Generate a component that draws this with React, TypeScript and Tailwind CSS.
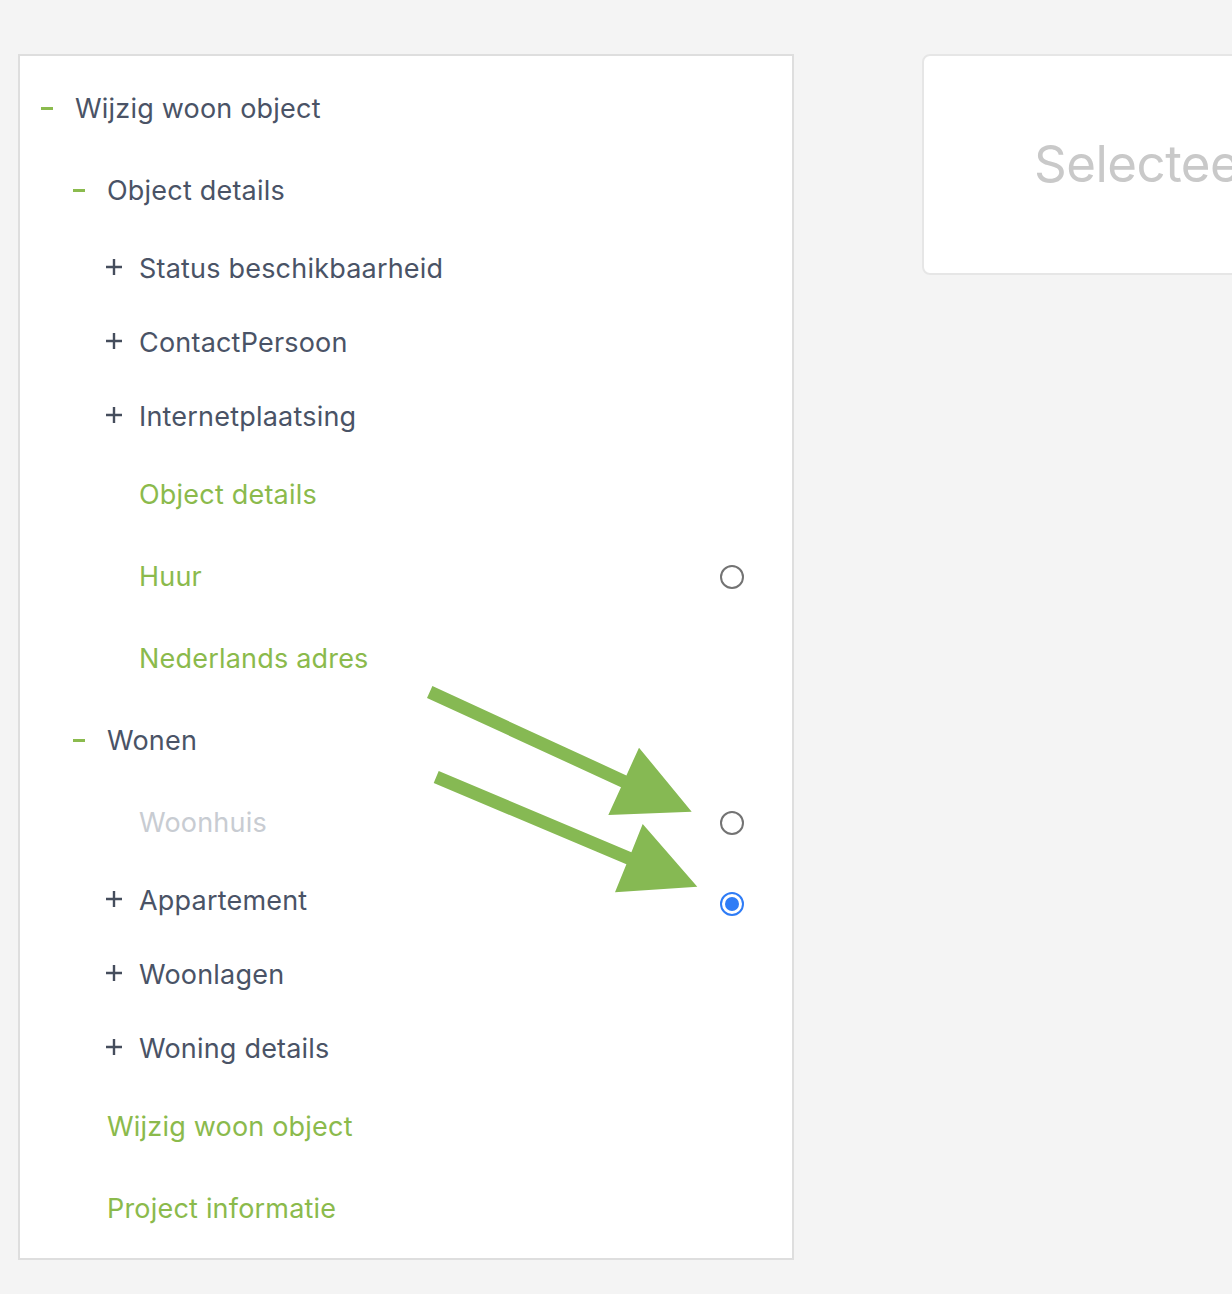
import React from "react";

type Row = {
    label: string;
    level: number;
    kind: "open" | "closed" | "link" | "disabled";
    radio?: "off" | "on";
};

const rows: Row[] = [
    { label: "Wijzig woon object", level: 0, kind: "open" },
    { label: "Object details", level: 1, kind: "open" },
    { label: "Status beschikbaarheid", level: 2, kind: "closed" },
    { label: "ContactPersoon", level: 2, kind: "closed" },
    { label: "Internetplaatsing", level: 2, kind: "closed" },
    { label: "Object details", level: 2, kind: "link" },
    { label: "Huur", level: 2, kind: "link", radio: "off" },
    { label: "Nederlands adres", level: 2, kind: "link" },
    { label: "Wonen", level: 1, kind: "open" },
    { label: "Woonhuis", level: 2, kind: "disabled", radio: "off" },
    { label: "Appartement", level: 2, kind: "closed", radio: "on" },
    { label: "Woonlagen", level: 2, kind: "closed" },
    { label: "Woning details", level: 2, kind: "closed" },
    { label: "Wijzig woon object", level: 1, kind: "link" },
    { label: "Project informatie", level: 1, kind: "link" },
];

const indent = ["pl-[21px]", "pl-[53px]", "pl-[85px]"];

function Toggle({ kind }: { kind: Row["kind"] }) {
    if (kind === "open") {
        return <span className="block w-[12px] h-[3px] bg-[#8bbb4e]" />;
    }
    if (kind === "closed") {
        return (
            <svg width="18" height="18" viewBox="0 0 18 18" className="mt-[-3px]">
                <path d="M9 1v16M1 9h16" stroke="#454d5c" strokeWidth="2.4" />
            </svg>
        );
    }
    return null;
}

function Radio({ on }: { on: boolean }) {
    if (on) {
        return (
            <span className="flex items-center justify-center w-[24px] h-[24px] rounded-full border-[2px] border-[#2f7cf6] mt-[8px]">
                <span className="w-[14px] h-[14px] rounded-full bg-[#2f7cf6]" />
            </span>
        );
    }
    return <span className="block w-[24px] h-[24px] rounded-full border-[2px] border-[#737373] mt-[2px]" />;
}

function TreeRow({ row }: { row: Row }) {
    const tall = row.kind === "closed" ? "h-[74px]" : "h-[82px]";
    const color =
        row.kind === "link"
            ? "text-[#8bba4c]"
            : row.kind === "disabled"
            ? "text-[#c8ccd2]"
            : "text-[#4a5366]";
    return (
        <div className={`flex items-center justify-between pr-[48px] ${tall} ${indent[row.level]}`}>
            <div className="flex items-center">
                <span className="w-[34px] flex items-center">
                    <Toggle kind={row.kind} />
                </span>
                <span className={`text-[27px] leading-none tracking-[0.2px] ${color}`}>{row.label}</span>
            </div>
            {row.radio && <Radio on={row.radio === "on"} />}
        </div>
    );
}

export default function App() {
    return (
        <div
            className="relative w-[1232px] h-[1294px] overflow-hidden bg-[#f4f4f4]"
            style={{ fontFamily: "Inter, 'Noto Sans', sans-serif" }}
        >
            <div className="flex items-start pt-[54px] pl-[18px] gap-[128px]">
                <div className="w-[776px] h-[1206px] shrink-0 bg-white border-2 border-[#dedede] pt-[11px]">
                    {rows.map((r, i) => (
                        <TreeRow key={i} row={r} />
                    ))}
                </div>
                <div className="w-[780px] h-[221px] shrink-0 bg-white border-2 border-[#e6e6e6] rounded-[8px] flex items-center pl-[110px]">
                    <span className="text-[51px] text-[#c9c9c9] tracking-[-0.5px]">Selecteer een onderdeel</span>
                </div>
            </div>

            <svg className="absolute left-0 top-0 pointer-events-none" width="1232" height="1294">
                <polygon
                    fill="#86b953"
                    points="432.4,686.1 626.4,775.4 639,747.7 691.7,811.7 608.3,815 621,787.2 427,697.9"
                />
                <polygon
                    fill="#86b953"
                    points="438.7,771 631.4,852.2 642.7,824 697.3,886.7 615,892.3 626.4,864.2 433.7,783"
                />
            </svg>
        </div>
    );
}
